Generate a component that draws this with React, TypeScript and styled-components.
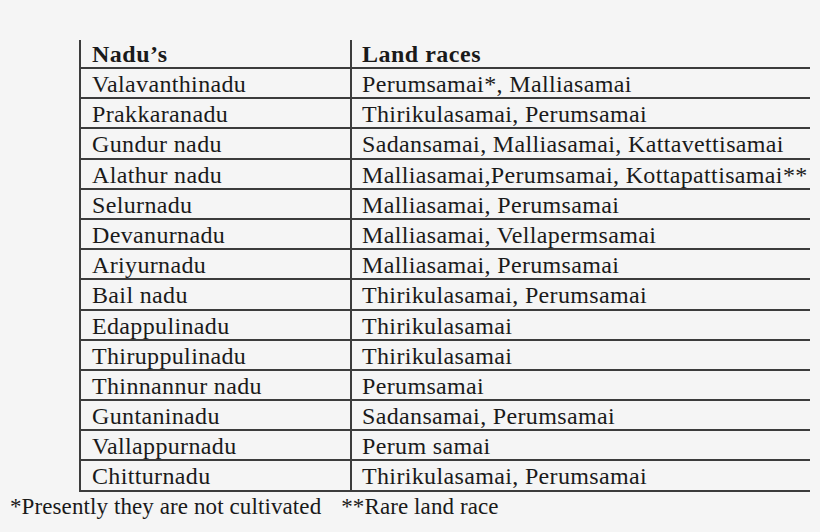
import React from "react";
import styled, { createGlobalStyle } from "styled-components";

const Global = createGlobalStyle`
  html, body { margin: 0; padding: 0; background: #f5f5f5; }
  body { font-family: "Liberation Serif", "Times New Roman", serif; color: #1a1a1a; }
`;

const Page = styled.div`
  width: 820px;
  height: 532px;
  padding: 40px 0 0 79px;
  box-sizing: border-box;
  overflow: hidden;
`;

const Table = styled.div`
  display: grid;
  grid-template-columns: 271px 460px;
  width: 731px;
`;

const Cell = styled.div<{ $first?: boolean; $head?: boolean }>`
  height: 30.2px;
  box-sizing: border-box;
  border-bottom: 2px solid #3c3c3c;
  border-left: 2px solid #3c3c3c;
  padding-left: ${(p) => (p.$first ? "11px" : "10px")};
  font-size: 24px;
  letter-spacing: 0.35px;
  line-height: 30px;
  white-space: nowrap;
  font-weight: ${(p) => (p.$head ? 700 : 400)};
  ${(p) => (p.$head ? "height: 29px; line-height: 29px; letter-spacing: 0.5px;" : "")}
`;

const Notes = styled.div`
  display: flex;
  gap: 20px;
  margin-left: -69px;
  font-size: 23px;
  letter-spacing: 0.1px;
  line-height: 30px;
`;

const rows: [string, string][] = [
  ["Valavanthinadu", "Perumsamai*, Malliasamai"],
  ["Prakkaranadu", "Thirikulasamai, Perumsamai"],
  ["Gundur nadu", "Sadansamai, Malliasamai, Kattavettisamai"],
  ["Alathur nadu", "Malliasamai,Perumsamai, Kottapattisamai**"],
  ["Selurnadu", "Malliasamai, Perumsamai"],
  ["Devanurnadu", "Malliasamai, Vellapermsamai"],
  ["Ariyurnadu", "Malliasamai, Perumsamai"],
  ["Bail nadu", "Thirikulasamai, Perumsamai"],
  ["Edappulinadu", "Thirikulasamai"],
  ["Thiruppulinadu", "Thirikulasamai"],
  ["Thinnannur nadu", "Perumsamai"],
  ["Guntaninadu", "Sadansamai, Perumsamai"],
  ["Vallappurnadu", "Perum samai"],
  ["Chitturnadu", "Thirikulasamai, Perumsamai"],
];

export default function App() {
  return (
    <Page>
      <Global />
      <Table>
        <Cell $first $head>Nadu’s</Cell>
        <Cell $head>Land races</Cell>
        {rows.map(([a, b]) => (
          <React.Fragment key={a}>
            <Cell $first>{a}</Cell>
            <Cell>{b}</Cell>
          </React.Fragment>
        ))}
      </Table>
      <Notes>
        <span>*Presently they are not cultivated</span>
        <span>**Rare land race</span>
      </Notes>
    </Page>
  );
}
